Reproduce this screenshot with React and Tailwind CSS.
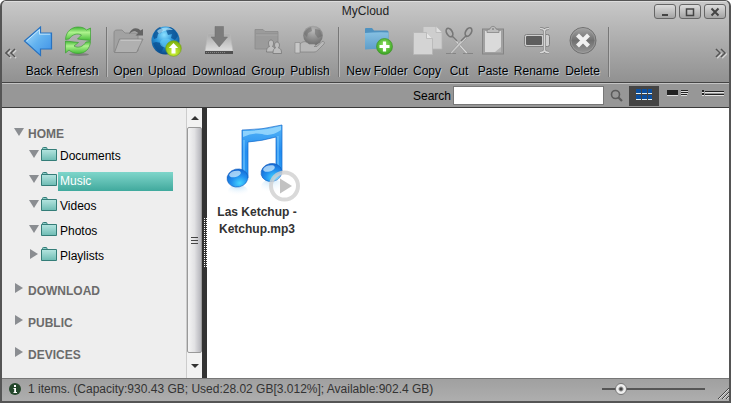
import React, { useState } from 'react';

function BackIcon() {
    return (
        <svg viewBox="0 0 32 32" className="h-8 w-8">
            <defs>
                <linearGradient id="back" x1="0" y1="0" x2="1" y2="1">
                    <stop offset="0" stopColor="#b4e2fc" />
                    <stop offset="0.5" stopColor="#62b2ef" />
                    <stop offset="1" stopColor="#3d8fe6" />
                </linearGradient>
            </defs>
            <path d="M1.500 16 17.500 2v6h11v16h-11v6.500z" fill="url(#back)" stroke="#2872c0" strokeWidth="1.2" />
            <path d="M3.500 16 16.500 4.500v4.700h10.700" fill="none" stroke="#d5f0ff" strokeWidth="1" opacity="0.8" />
        </svg>
    );
}

function RefreshIcon() {
    return (
        <svg viewBox="0 0 32 32" className="h-8 w-8">
            <defs>
                <linearGradient id="refresh" x1="0" y1="0" x2="0" y2="1">
                    <stop offset="0" stopColor="#3fb534" />
                    <stop offset="0.4" stopColor="#aef28e" />
                    <stop offset="1" stopColor="#46bd38" />
                </linearGradient>
            </defs>
            <ellipse cx="17" cy="29.500" rx="10" ry="1.500" fill="#666" opacity="0.6" />
            <path d="M3.500 14.500C4 6 10 2 16 2c4 0 6.500 1 8.500 3l4-2v12.500l-13-1.500 4-4c-4-2-9-1-12.500 4z" fill="url(#refresh)" stroke="#3ba132" strokeWidth="0.7" />
            <path d="M28.500 16.500C28 24 23 28.500 16 28.500c-4 0-7-1.500-9-3.500l-3.500 3V16l13 1.500-4.500 3.500c4 2.500 9 1 12-4z" fill="url(#refresh)" stroke="#3ba132" strokeWidth="0.7" />
        </svg>
    );
}

function OpenIcon() {
    return (
        <svg viewBox="0 0 32 32" className="h-8 w-8">
            <path d="M2 27V8c0-2 1-3 3-3h5l3 3h10c2 0 3 1 3 3v15z" fill="#a2a2a2" stroke="#858585" strokeWidth="0.8" />
            <path d="M7.500 14H31l-6.500 13.500H2.500z" fill="#b0b0b0" stroke="#808080" strokeWidth="0.8" />
            <path d="M8.500 15.200h20.500" stroke="#cbcbcb" />
            <path d="M17 9c2-6 8-7.500 11.500-3.500L31 4v6.500h-7.500L26 8c-3-3-6-2-9 1z" fill="#646464" />
        </svg>
    );
}

function UploadIcon() {
    return (
        <svg viewBox="0 0 32 32" className="h-8 w-8">
            <defs>
                <radialGradient id="globe" cx="0.45" cy="0.3" r="0.75">
                    <stop offset="0" stopColor="#8be0ff" />
                    <stop offset="0.45" stopColor="#2793d9" />
                    <stop offset="1" stopColor="#053f7c" />
                </radialGradient>
                <radialGradient id="up" cx="0.5" cy="0.75" r="0.75">
                    <stop offset="0" stopColor="#d3f63a" />
                    <stop offset="1" stopColor="#78ad0a" />
                </radialGradient>
            </defs>
            <circle cx="14.500" cy="15.500" r="14" fill="url(#globe)" />
            <path d="M2 11C3 6 6 3 9 2l3 3-2 3-3 1-1 4-3 1zM15 5l4-3c4 1 7 5 8 9l-3 4-4-2 1-4-4 1zM5 17l5 1 3 4-3 6C6 26 3 22 2 18z" fill="#0a4d8f" opacity="0.75" />
            <ellipse cx="15" cy="18" rx="6" ry="4.500" fill="#64cdf8" opacity="0.6" />
            <path d="M6 6c4-4 12-5 16-1-5 0-9 0-14 4z" fill="#c6f0ff" opacity="0.6" />
            <circle cx="22.500" cy="23.500" r="7.800" fill="url(#up)" stroke="#739f17" strokeWidth="0.6" />
            <path d="M22.500 18l4.700 5h-2.700v5.500h-4V23h-2.700z" fill="#fff" />
        </svg>
    );
}

function DownloadIcon() {
    return (
        <svg viewBox="0 0 32 32" className="h-8 w-8">
            <defs>
                <linearGradient id="drive" x1="0" y1="0" x2="0" y2="1">
                    <stop offset="0" stopColor="#a9a9a9" />
                    <stop offset="1" stopColor="#dedede" />
                </linearGradient>
            </defs>
            <path d="M5 9h22l3 17H2z" fill="url(#drive)" stroke="#b9b9b9" strokeWidth="0.6" />
            <path d="M2 26h28v3H2z" fill="#505050" />
            <path d="M3 27.500h20" stroke="#858585" strokeDasharray="1 1" />
            <path d="M12 1.500h8.500V12h4L16.200 22 8 12h4z" fill="#7c7c7c" stroke="#6e6e6e" strokeWidth="0.5" />
        </svg>
    );
}

function GroupIcon() {
    return (
        <svg viewBox="0 0 32 32" className="h-8 w-8">
            <path d="M3 24V4.500h8l2 2h13V24z" fill="#9b9b9b" stroke="#8a8a8a" strokeWidth="0.8" />
            <path d="M4 9h21.500" stroke="#8c8c8c" />
            <path d="M4 10h21.500" stroke="#a8a8a8" />
            <g fill="#bdbdbd" stroke="#777" strokeWidth="0.8">
                <path d="M14.500 27c0-4 1.500-5 3-5.500-2-3-1-6.500 1.500-6.500s3.500 3.500 1.500 6.500c2 .5 3 2 3 5.500z" />
                <path d="M21 28.500c0-4 1-5 2.500-5.500-2-3-.5-6 1.500-6s3.500 3 1.500 6c2 .5 3 1.500 3 5.500z" />
            </g>
        </svg>
    );
}

function PublishIcon() {
    return (
        <svg viewBox="0 0 32 32" className="h-8 w-8">
            <defs>
                <radialGradient id="sphere" cx="0.5" cy="0.25" r="0.75">
                    <stop offset="0" stopColor="#b8b8b8" />
                    <stop offset="1" stopColor="#6c6c6c" />
                </radialGradient>
            </defs>
            <circle cx="19" cy="10.500" r="9.800" fill="url(#sphere)" />
            <path d="M10 9c2-5 5-6 7-7l1 4-4 2-1 4zM21 4l5 1 2 6-4 2-3-4z" fill="#686868" opacity="0.5" />
            <path d="M6 19c4-4 7-2 9 0h5c2 0 2 2.500 0 2.500h3l5-5c2-.8 3 1 2 2.500L24 25c-1 1-2 2-4 2H6z" fill="#b8b8b8" stroke="#808080" strokeWidth="0.7" />
            <path d="M1 17.500h5V28H1z" fill="#c8c8c8" stroke="#8b8b8b" strokeWidth="0.7" />
        </svg>
    );
}

function NewFolderIcon() {
    return (
        <svg viewBox="0 0 32 32" className="h-8 w-8">
            <defs>
                <linearGradient id="blueFolder" x1="0" y1="0" x2="0" y2="1">
                    <stop offset="0" stopColor="#86c0e2" />
                    <stop offset="1" stopColor="#5d9dc9" />
                </linearGradient>
                <radialGradient id="plus" cx="0.5" cy="0.4" r="0.6">
                    <stop offset="0" stopColor="#93e562" />
                    <stop offset="1" stopColor="#39a323" />
                </radialGradient>
            </defs>
            <path d="M4 24V4q0-1 1-1h6l2 2.500h13q1.500 0 1.500 1.500v17q-12-1-23.500 0z" fill="#4f92c0" />
            <path d="M4 24.500V8q12-1 23.500-.5V24q-12-.5-23.500.5z" fill="url(#blueFolder)" />
            <circle cx="23.500" cy="21.500" r="8" fill="url(#plus)" stroke="#43952e" strokeWidth="0.7" />
            <path d="M23.500 16.500v10M18.500 21.500h10" stroke="#fff" strokeWidth="3.200" />
        </svg>
    );
}

function CopyIcon() {
    return (
        <svg viewBox="0 0 32 32" className="h-8 w-8">
            <g fill="#cecece" stroke="#b5b5b5" strokeWidth="0.8">
                <path d="M12 1.500h13l6 6V24H12z" />
                <path d="M25 1.500v6h6" fill="#e0e0e0" />
                <path d="M2.500 7.500h13l6 6v16h-19z" fill="#d4d4d4" />
                <path d="M15.500 7.500v6h6" fill="#e6e6e6" />
            </g>
        </svg>
    );
}

function CutIcon() {
    return (
        <svg viewBox="0 0 32 32" className="h-8 w-8">
            <path d="M3 28.500h10M20 28.500h10" stroke="#858585" strokeWidth="1.200" />
            <path d="M9.500 11 25 28l-2 .5L9 13z" fill="#d8d8d8" stroke="#888" strokeWidth="0.5" />
            <path d="M22 11 7 28l2 .5L24 13z" fill="#c9c9c9" stroke="#888" strokeWidth="0.5" />
            <g fill="none" stroke="#777" strokeWidth="1.700">
                <ellipse cx="6.500" cy="7.500" rx="2.800" ry="4.600" transform="rotate(-30 6.500 7.500)" />
                <ellipse cx="25.500" cy="7" rx="2.800" ry="4.600" transform="rotate(30 25.500 7)" />
            </g>
            <path d="m9 11 5 5M23 11l-5 5" stroke="#777" strokeWidth="1.500" />
        </svg>
    );
}

function PasteIcon() {
    return (
        <svg viewBox="0 0 32 32" className="h-8 w-8">
            <rect x="5.500" y="4" width="21" height="25" fill="#a1a1a1" stroke="#858585" />
            <path d="M8 6h16v21H8z" fill="#dadada" />
            <path d="M24 22v5h-6z" fill="#b5b5b5" />
            <path d="M10 7.500V5l3-1c.5-3.500 5.500-3.500 6 0l3 1v2.500z" fill="#bdbdbd" stroke="#858585" strokeWidth="0.8" />
            <circle cx="16" cy="4" r="1" fill="#888" />
        </svg>
    );
}

function RenameIcon() {
    return (
        <svg viewBox="0 0 32 32" className="h-8 w-8">
            <rect x="3.500" y="9.500" width="25" height="12" rx="2" fill="#cfcfcf" stroke="#808080" />
            <rect x="5" y="11" width="16" height="9" rx="1" fill="#5e5e5e" />
            <path d="M19 3.500c3 0 4 .5 4.500 2 .5-1.500 1.500-2 4.500-2M23.500 5v21M19 27.500c3 0 4-.5 4.500-2 .5 1.500 1.500 2 4.500 2" fill="none" stroke="#808080" strokeWidth="3" />
            <path d="M19 3.500c3 0 4 .5 4.500 2 .5-1.500 1.500-2 4.500-2M23.500 5v21M19 27.500c3 0 4-.5 4.500-2 .5 1.500 1.500 2 4.500 2" fill="none" stroke="#d6d6d6" strokeWidth="1.600" />
        </svg>
    );
}

function DeleteIcon() {
    return (
        <svg viewBox="0 0 32 32" className="h-8 w-8">
            <defs>
                <linearGradient id="del" x1="0" y1="0" x2="0" y2="1">
                    <stop offset="0" stopColor="#a5a5a5" />
                    <stop offset="0.5" stopColor="#707070" />
                    <stop offset="1" stopColor="#969696" />
                </linearGradient>
            </defs>
            <circle cx="16" cy="15.500" r="13" fill="url(#del)" stroke="#707070" strokeWidth="1" />
            <circle cx="16" cy="15.500" r="12" fill="none" stroke="#a5a5a5" strokeWidth="0.6" />
            <path d="m10.500 10 11 11M21.500 10l-11 11" stroke="#f0f0f0" strokeWidth="4.200" />
        </svg>
    );
}

const toolGroups = [
    [
        { label: 'Back', icon: BackIcon, width: 'w-[30px]' },
        { label: 'Refresh', icon: RefreshIcon, width: 'w-[47px]' },
    ],
    [
        { label: 'Open', icon: OpenIcon, width: 'w-[34px]' },
        { label: 'Upload', icon: UploadIcon, width: 'w-[44px]' },
        { label: 'Download', icon: DownloadIcon, width: 'w-[60px]' },
        { label: 'Group', icon: GroupIcon, width: 'w-[38px]' },
        { label: 'Publish', icon: PublishIcon, width: 'w-[46px]' },
    ],
    [
        { label: 'New Folder', icon: NewFolderIcon, width: 'w-[68px]' },
        { label: 'Copy', icon: CopyIcon, width: 'w-[32px]' },
        { label: 'Cut', icon: CutIcon, width: 'w-[32px]' },
        { label: 'Paste', icon: PasteIcon, width: 'w-[36px]' },
        { label: 'Rename', icon: RenameIcon, width: 'w-[51px]' },
        { label: 'Delete', icon: DeleteIcon, width: 'w-[41px]' },
    ],
];

const folders = ['Documents', 'Music', 'Videos', 'Photos', 'Playlists'];
const sections = ['DOWNLOAD', 'PUBLIC', 'DEVICES'];

function WindowButton({ label, children }) {
    return (
        <button aria-label={label} className="flex h-[15px] w-[22px] items-center justify-center rounded-[3px] border border-[#666] bg-linear-to-b from-[#dcdcdc] to-[#a4a4a4]">
            <svg viewBox="0 0 10 10" className="h-[10px] w-[10px]" fill="none" stroke="#444" strokeWidth="2">
                {children}
            </svg>
        </button>
    );
}

function Chevrons({ right }) {
    const d = right ? 'M1 1l4 4-4 4M6 1l4 4-4 4' : 'M5 1L1 5l4 4M10 1L6 5l4 4';
    return (
        <svg viewBox="0 0 12 11" className="h-[11px] w-3" fill="none">
            <path d={d} stroke="#d0d0d0" strokeWidth="2" transform="translate(1 1)" />
            <path d={d} stroke="#555" strokeWidth="1.600" />
        </svg>
    );
}

function Triangle({ open }) {
    return (
        <svg viewBox="0 0 10 10" className="h-[10px] w-[10px] shrink-0" fill="#8a8d91">
            {open ? <path d="M0 1h10L5 9z" /> : <path d="M1 0v10l8-5z" />}
        </svg>
    );
}

function FolderIcon() {
    return (
        <svg viewBox="0 0 16 14" className="h-[14px] w-4 shrink-0">
            <defs>
                <linearGradient id="teal" x1="0" y1="0" x2="0" y2="1">
                    <stop offset="0" stopColor="#b5e5e0" />
                    <stop offset="1" stopColor="#6dbbb3" />
                </linearGradient>
            </defs>
            <path d="M1.500 3V1.500q0-1 1-1H5q1 0 1 1V3" fill="#8ccfc8" stroke="#347d78" />
            <path d="M.5 2.500h15v11H.5z" fill="url(#teal)" stroke="#347d78" />
        </svg>
    );
}

function MusicIcon() {
    return (
        <svg viewBox="0 0 90 84" className="h-[84px] w-[90px]">
            <defs>
                <linearGradient id="note" x1="0" y1="0" x2="0" y2="1">
                    <stop offset="0" stopColor="#55b5f7" />
                    <stop offset="0.5" stopColor="#238df0" />
                    <stop offset="1" stopColor="#2a9cf3" />
                </linearGradient>
                <radialGradient id="head" cx="0.55" cy="0.8" r="0.8">
                    <stop offset="0" stopColor="#45d4ff" />
                    <stop offset="0.5" stopColor="#2190ef" />
                    <stop offset="1" stopColor="#1263cf" />
                </radialGradient>
                <radialGradient id="reflection" cx="0.5" cy="0" r="0.9">
                    <stop offset="0" stopColor="#8ecbf5" stopOpacity="0.7" />
                    <stop offset="1" stopColor="#fff" stopOpacity="0" />
                </radialGradient>
            </defs>
            <ellipse cx="26" cy="71" rx="10" ry="6" fill="url(#reflection)" />
            <ellipse cx="60" cy="67" rx="11" ry="8" fill="url(#reflection)" />
            <path d="M30 10q20 0 40-5v46h-6V17q-14 4-28 5v36h-6z" fill="url(#note)" stroke="#1268cc" strokeWidth="0.7" />
            <path d="M31 11q20 0 38-5v4q-10 7-19 4-9-2-19 3z" fill="#a5e0ff" opacity="0.75" />
            <path d="M32 20v32M66 16v30" stroke="#7bcbff" strokeWidth="1.300" opacity="0.8" />
            <ellipse cx="25.500" cy="58" rx="10.500" ry="9" fill="url(#head)" stroke="#1260c0" strokeWidth="0.6" transform="rotate(-12 25.500 58)" />
            <ellipse cx="59.500" cy="52.500" rx="10.500" ry="9" fill="url(#head)" stroke="#1260c0" strokeWidth="0.6" transform="rotate(-12 59.500 52.500)" />
            <ellipse cx="23" cy="54" rx="6" ry="3" fill="#d8f2ff" opacity="0.7" transform="rotate(-15 23 54)" />
            <ellipse cx="57" cy="48.500" rx="6" ry="3" fill="#d8f2ff" opacity="0.7" transform="rotate(-15 57 48.500)" />
            <circle cx="72.500" cy="66" r="13.500" fill="#fff" fillOpacity="0.3" stroke="#d0d0d0" strokeOpacity="0.8" strokeWidth="4" />
            <path d="M68 58.500v15l12-7.500z" fill="#c2c2c2" />
        </svg>
    );
}

export default function App() {
    const [selected, setSelected] = useState('Music');
    const [search, setSearch] = useState('');
    const [zoom, setZoom] = useState(14);

    return (
        <div className="flex h-screen flex-col overflow-hidden rounded-t-md border-x-2 border-t border-b-2 border-[#555] bg-[#999] font-['Liberation_Sans',Arial,sans-serif] text-xs text-black">
            <header className="border-t border-[#ddd] border-b border-b-[#444] bg-linear-to-b from-[#c8c8c8] to-[#919191]">
                <div className="grid grid-cols-3 items-start px-[3px] pt-[2px]">
                    <h1 className="col-start-2 text-center leading-[14px] text-[#222]">MyCloud</h1>
                    <div className="flex justify-end gap-[3px] pb-[1px]">
                        <WindowButton label="Minimize"><path d="M2 8h6" /></WindowButton>
                        <WindowButton label="Maximize"><path d="M1.500 2h7v6.500h-7z" strokeWidth="1.500" /></WindowButton>
                        <WindowButton label="Close"><path d="m1.500 1.500 7 7M8.500 1.500l-7 7" /></WindowButton>
                    </div>
                </div>
                <nav className="flex pt-[5px] pb-[3px]">
                    <button aria-label="Scroll tools left" className="flex w-[22px] items-center justify-center pt-[3px] pr-1"><Chevrons /></button>
                    {toolGroups.map((group, i) => (
                        <div key={i} className="flex">
                            {group.map(({ label, icon: Icon, width }) => (
                                <button key={label} className={`${width} flex shrink-0 flex-col items-center whitespace-nowrap [text-shadow:1px_1px_0_#bcc6d0]`}>
                                    <Icon />
                                    <span className="mt-[6px] leading-4">{label}</span>
                                </button>
                            ))}
                            <div className="mr-[3px] ml-[5px] mt-[2px] h-[50px] w-[2px] border-l border-[#777] bg-[#bbb]" />
                        </div>
                    ))}
                    <button aria-label="Scroll tools right" className="ml-auto flex w-4 items-center justify-center pt-[3px]"><Chevrons right /></button>
                </nav>
            </header>

            <div className="flex h-[25px] shrink-0 items-center border-t border-b border-t-[#c4c4c4] border-b-[#3a3a3a] bg-[#979797]">
                <label htmlFor="search" className="ml-auto pr-[2px]">Search</label>
                <input id="search" value={search} onChange={(e) => setSearch(e.target.value)} className="h-[19px] w-[151px] border border-[#777] bg-white px-1 outline-none" />
                <button aria-label="Search files" className="flex w-[25px] justify-center">
                    <svg viewBox="0 0 13 13" className="h-[13px] w-[13px]" fill="none" stroke="#5b5b5b">
                        <circle cx="5.500" cy="5.500" r="4" strokeWidth="1.600" />
                        <path d="m8.500 8.500 3.500 3.500" strokeWidth="2.200" />
                    </svg>
                </button>
                <button aria-label="Icon view" className="flex h-5 w-[30px] items-start justify-center bg-[#444] pt-[3px]">
                    <svg viewBox="0 0 16 12" className="h-3 w-4">
                        <path d="M0 2h5M6 2h5M12 2h4M0 8h5M6 8h5M12 8h4" stroke="#0a4fa0" strokeWidth="4" />
                        <path d="M0 4.500h5M6 4.500h5M12 4.500h4M0 10.500h5M6 10.500h5M12 10.500h4" stroke="#e0f0f5" />
                    </svg>
                </button>
                <button aria-label="Tile view" className="flex h-5 w-[38px] items-start justify-center pt-1">
                    <svg viewBox="0 0 22 7" className="h-[7px] w-[22px]">
                        <path d="M0 0h11v5H0zM14 0h7v1h-7zM14 2h7v1h-7zM14 4h6v1h-6z" fill="#222" />
                        <path d="M0 5h11v1H0zM14 1h7v1h-7zM14 3h7v1h-7zM14 5h6v1h-6z" fill="#ddd" />
                    </svg>
                </button>
                <button aria-label="List view" className="flex h-5 w-[32px] items-start justify-center pt-1">
                    <svg viewBox="0 0 22 7" className="h-[7px] w-[22px]">
                        <path d="M0 0h2v2H0zM0 3h2v2H0zM3 1h19v1H3zM3 4h19v1H3z" fill="#222" />
                        <path d="M0 2h2v1H0zM0 5h2v1H0zM3 2h19v1H3zM3 5h19v1H3z" fill="#e4e4e4" />
                    </svg>
                </button>
            </div>

            <main className="flex min-h-0 flex-1">
                <aside className="shrink-0 basis-[184px] overflow-hidden bg-[#eee] pt-4 pl-3">
                    <button className="flex h-5 items-center gap-1 font-bold text-[#6b6b6b]">
                        <span className="pb-1"><Triangle open /></span>HOME
                    </button>
                    <ul>
                        {folders.map((name) => (
                            <li key={name}>
                                <button onClick={() => setSelected(name)} className="flex h-[25px] w-full items-center pl-[15px]">
                                    <span className="flex items-center gap-[2px] pb-[5px]">
                                        <Triangle open={name !== 'Playlists'} />
                                        <FolderIcon />
                                    </span>
                                    <span className={name === selected ? 'ml-[1px] h-[19px] w-[115px] bg-linear-to-b from-[#7fd6cb] to-[#3fa99d] pl-[2px] text-left leading-[19px] text-white' : 'ml-[1px] pl-[2px] leading-[19px]'}>
                                        {name}
                                    </span>
                                </button>
                            </li>
                        ))}
                    </ul>
                    <div className="pt-[6px]">
                        {sections.map((name) => (
                            <button key={name} className="flex h-8 items-center gap-1 font-bold text-[#6b6b6b]">
                                <span className="pb-[6px]"><Triangle /></span>{name}
                            </button>
                        ))}
                    </div>
                </aside>
                <div className="flex w-4 shrink-0 flex-col border-l border-[#ccc] bg-[#f2f2f2]">
                    <button aria-label="Scroll up" className="flex h-[19px] items-center justify-center">
                        <svg viewBox="0 0 8 4" className="h-1 w-2" fill="#333"><path d="M4 0l4 4H0z" /></svg>
                    </button>
                    <div className="flex flex-1 items-center justify-center rounded-[2px] border border-[#999] bg-linear-to-r from-[#f4f4f4] via-[#e2e2e4] to-[#b5b5bb]">
                        <div className="flex flex-col gap-[2px]">
                            <i className="h-[1px] w-[7px] bg-[#444]" />
                            <i className="h-[1px] w-[7px] bg-[#444]" />
                            <i className="h-[1px] w-[7px] bg-[#444]" />
                        </div>
                    </div>
                    <button aria-label="Scroll down" className="flex h-[25px] items-center justify-center pt-2 pb-2">
                        <svg viewBox="0 0 8 4" className="h-1 w-2" fill="#333"><path d="M4 4l4-4H0z" /></svg>
                    </button>
                </div>
                <div className="flex w-[5px] shrink-0 items-center justify-center bg-[#333]">
                    <div className="h-[50px] w-1 bg-[conic-gradient(#fff_25%,#333_0)] bg-[length:2px_2px]" />
                </div>
                <section className="flex flex-1 items-start bg-white pt-3">
                    <button className="flex w-[100px] flex-col items-center text-center font-bold leading-[17px] text-[#333]">
                        <MusicIcon />
                        <span>Las Ketchup - Ketchup.mp3</span>
                    </button>
                </section>
            </main>

            <footer className="flex h-[23px] shrink-0 items-center border-t border-[#777] bg-linear-to-b from-[#a0a0a0] to-[#aeaeae] pb-[2px] pl-[7px] text-[#333]">
                <svg viewBox="0 0 12 12" className="mr-[7px] h-3 w-3">
                    <circle cx="6" cy="6" r="6" fill="#24472b" />
                    <path d="M5 2h2v2H5zM4.500 5H7v4h1v1H4.500V9h.7V6h-.7z" fill="#fff" />
                </svg>
                <p>1 items. (Capacity:930.43 GB; Used:28.02 GB[3.012%]; Available:902.4 GB)</p>
                <input
                    type="range"
                    aria-label="Icon size"
                    value={zoom}
                    onChange={(e) => setZoom(Number(e.target.value))}
                    className="mr-3 ml-auto h-3 w-[103px] appearance-none bg-[linear-gradient(#555,#555)] bg-[length:100%_2px] bg-center bg-no-repeat [&::-webkit-slider-thumb]:h-3 [&::-webkit-slider-thumb]:w-3 [&::-webkit-slider-thumb]:appearance-none [&::-webkit-slider-thumb]:rounded-full [&::-webkit-slider-thumb]:border [&::-webkit-slider-thumb]:border-[#777] [&::-webkit-slider-thumb]:bg-[radial-gradient(circle,#444_0_1px,#eee_3px)]"
                />
                <svg viewBox="0 0 12 12" className="h-3 w-3 self-end" fill="none">
                    <path d="M1 12 12 1M5 12l7-7M9 12l3-3" stroke="#444" />
                    <path d="M2 12 12 2M6 12l6-6M10 12l2-2" stroke="#ddd" />
                </svg>
            </footer>
        </div>
    );
}
